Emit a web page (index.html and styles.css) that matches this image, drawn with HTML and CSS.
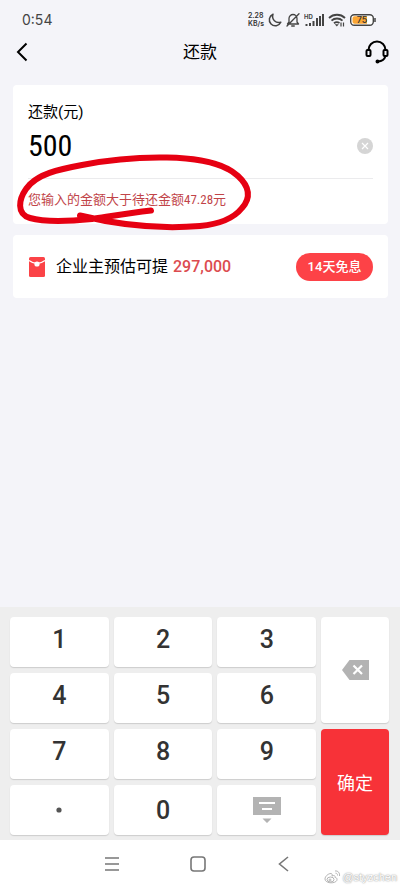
FILE: index.html
```html
<!DOCTYPE html>
<html lang="zh-CN">
<head>
<meta charset="utf-8">
<meta name="viewport" content="width=device-width, initial-scale=1">
<title>还款</title>
<link rel="stylesheet" href="styles.css">
</head>
<body>
<div class="screen">
  <div class="status">
    <span class="clock">0:54</span>
    <div class="indicators">
      <span class="speed"><span>2.28</span><span>KB/s</span></span>
      <svg width="14" height="14" viewBox="0 0 14 14"><path d="M5 1.2a6 6 0 1 0 7.8 8A6.2 6.2 0 0 1 5 1.2z" fill="none" stroke="#444" stroke-width="1.5" stroke-linejoin="round"/></svg>
      <svg width="14" height="14" viewBox="0 0 14 14" fill="none" stroke="#444" stroke-width="1.3" stroke-linecap="round" stroke-linejoin="round"><path d="M3 9V5.5a4 4 0 0 1 8 0V9l1.500 2h-11zM5.700 13h2.600M13 .8L1 13"/></svg>
      <svg width="20" height="14" viewBox="0 0 20 14"><text x="0" y="6" class="hd">HD</text><path d="M2.500 13v-2M6 13v-3M9.500 13V8M13 13V5M16 13V3M19 13V1" stroke="#444" stroke-width="2"/></svg>
      <svg width="18" height="14" viewBox="0 0 18 14" fill="none" stroke="#444" stroke-width="1.800"><path d="M1 5a11.500 11.500 0 0 1 16 0M3.500 7.700a8 8 0 0 1 11 0M6 10.300a4.500 4.500 0 0 1 5.500-.3"/><path d="M8.800 13.500l-2-2.200h4z" fill="#444" stroke="none"/><path d="M13 9.500v4M15.500 9.500v4" stroke-width="1.200"/></svg>
      <svg width="26" height="12" viewBox="0 0 26 12"><rect x=".7" y=".7" width="22.600" height="10.600" rx="3.500" fill="#fff" stroke="#444" stroke-width="1.400"/><path d="M4.500 2.200H17v7.600H4.500A2 2 0 0 1 2.500 8V4a2 2 0 0 1 2-1.800z" fill="#faa634"/><path d="M25 4v4" stroke="#444" stroke-width="1.500"/><text x="12" y="9" text-anchor="middle" class="charge">75</text></svg>
    </div>
  </div>
  <header class="header">
    <button class="header-btn start" aria-label="返回"><svg width="12" height="20" viewBox="0 0 12 20"><path d="M10.500 1.500L2 10l8.500 8.500" fill="none" stroke="#000" stroke-width="2"/></svg></button>
    <h1>还款</h1>
    <button class="header-btn" aria-label="客服"><svg width="24" height="24" viewBox="0 0 24 24" fill="none" stroke="#000" stroke-width="2"><path d="M3.500 10a8.500 8.500 0 0 1 17 0M20.500 16c-1 3.500-4 5.300-7.500 5.500"/><rect x="1.500" y="10" width="4" height="6" rx="1"/><rect x="18.500" y="10" width="4" height="6" rx="1"/><circle cx="12.500" cy="21.500" r="1" fill="#000"/></svg></button>
  </header>
  <main class="main">
    <section class="card amount-card">
      <label class="amount-label" for="amount">还款(元)</label>
      <div class="amount-row">
        <input id="amount" class="amount" type="text" inputmode="decimal" value="500">
        <button aria-label="清除"><svg width="16" height="16" viewBox="0 0 16 16"><circle cx="8" cy="8" r="8" fill="#d5d5d5"/><path d="M5 5l6 6M11 5l-6 6" stroke="#fff" stroke-width="1.200"/></svg></button>
      </div>
      <p class="error">您输入的金额大于待还金额47.28元</p>
      <svg class="marker" width="270" height="170" viewBox="0 70 270 170"><path d="M151 210.500C130 213 112 216 92 219C72 221 44 222 30 218C16 214 19 199 26 189C36 174 60 169 82 165C112 159 140 157 167 157.500C198 158 224 163 238 176C250 187 251 198 242 208C234 218 221 224 200 226C164 229 123 226 80 215.500" fill="none" stroke="#e60012" stroke-width="6" stroke-linecap="round" stroke-linejoin="round"/></svg>
    </section>
    <section class="card offer">
      <svg width="18" height="20" viewBox="0 0 18 20"><rect x="1" y="0" width="16" height="20" rx="1.500" fill="#fb4347"/><path d="M1 3.500q8 6 16 0" fill="none" stroke="#fff" stroke-width="1.300"/><circle cx="9" cy="7" r="2.600" fill="#fff"/></svg>
      <span class="offer-text">企业主预估可提</span>
      <strong class="offer-sum">297,000</strong>
      <button class="pill">14天免息</button>
    </section>
  </main>
  <div class="keypad">
    <button class="key">1</button><button class="key">2</button><button class="key">3</button>
    <button class="key tall" aria-label="删除"><svg width="28" height="20" viewBox="0 0 28 20"><path d="M8.500 0H28v20H8.500L1 10z" fill="#b3b3b3"/><path d="M12.500 5.500l8.500 8.500M21 5.500L12.500 14" stroke="#fff" stroke-width="2.200"/></svg></button>
    <button class="key">4</button><button class="key">5</button><button class="key">6</button>
    <button class="key">7</button><button class="key">8</button><button class="key">9</button>
    <button class="key tall confirm">确定</button>
    <button class="key low" aria-label="小数点"><svg width="6" height="6" viewBox="0 0 6 6"><circle cx="3" cy="3" r="2.600" fill="#555"/></svg></button>
    <button class="key low">0</button>
    <button class="key low" aria-label="收起键盘"><svg width="30" height="28" viewBox="0 0 30 28"><path d="M1 1h28v18H1zM10.500 22.500h9L15 27z" fill="#b3b3b3"/><path d="M7 7h16M10 13h10" stroke="#fff" stroke-width="2"/></svg></button>
  </div>
  <nav class="system">
    <button aria-label="菜单"><svg width="16" height="16" viewBox="0 0 16 16"><path d="M1 2h14M1 8h14M1 14h14" stroke="#777" stroke-width="1.600"/></svg></button>
    <button aria-label="主页"><svg width="16" height="16" viewBox="0 0 16 16"><rect x="1" y="1" width="14" height="14" rx="3" fill="none" stroke="#777" stroke-width="1.600"/></svg></button>
    <button aria-label="后退"><svg width="16" height="16" viewBox="0 0 16 16"><path d="M12 1L3.500 8l8.500 7" fill="none" stroke="#777" stroke-width="1.600"/></svg></button>
    <div class="watermark"><svg width="17" height="14" viewBox="0 0 17 14" fill="none" stroke="#b5b5b5" stroke-width="1"><path d="M7 3.500C4 3.500 1 6.500 1 9c0 5 12 5 12 .5 0-1.500-1-2-2-2 .5-2-1-2.500-3-1.500C8.500 4.500 8 3.500 7 3.500z"/><ellipse cx="6.500" cy="9.500" rx="3.500" ry="2.500"/><circle cx="6" cy="10" r="1"/><path d="M11 1c3-.5 5 2 4.500 5M11.500 3.200c1.500 0 2.200 1 2 2.300"/></svg><span>@styzchen</span></div>
  </nav>
</div>
</body>
</html>
```

FILE: styles.css
```css
* { box-sizing: border-box; }
body {
  margin: 0;
  color: #000;
  background: #f4f4f9;
  font-family: Roboto, "Noto Sans CJK SC", sans-serif;
}
button, input { font: inherit; color: inherit; border: 0; padding: 0; background: none; }
svg { display: block; flex: none; }
.screen { display: flex; flex-direction: column; min-height: 100vh; }
.status {
  display: flex;
  align-items: center;
  justify-content: space-between;
  height: 32px;
  padding: 8px 24px 0 22px;
}
.clock { font: 14px/20px Inter, sans-serif; color: #444; }
.indicators { display: flex; align-items: center; gap: 4px; }
.speed { display: flex; flex-direction: column; font: 600 7px/8px Inter, sans-serif; color: #333; }
.hd { font: 700 6px Inter, sans-serif; fill: #444; }
.charge { font: 500 9px Inter, sans-serif; fill: #333; }
.header {
  display: flex;
  align-items: center;
  justify-content: space-between;
  height: 40px;
  padding: 0 11px;
}
.header-btn { display: flex; width: 24px; }
.header-btn.start { padding-left: 5px; }
.header h1 { margin: 0; font-size: 17px; line-height: 24px; font-weight: 400; }
.main { flex: 1; display: flex; flex-direction: column; gap: 11px; padding: 13px 12px 13px 13px; }
.card { background: #fff; border-radius: 4px; padding: 0 15px; }
.amount-card { position: relative; padding-top: 16px; }
.amount-label { display: block; font-size: 15px; line-height: 22px; }
.amount-row {
  display: flex;
  align-items: center;
  justify-content: space-between;
  height: 56px;
  padding-bottom: 10px;
  border-bottom: 1px solid #ebebed;
}
.amount {
  flex: 1;
  min-width: 0;
  font: 400 30px/36px "Roboto Condensed", "Liberation Sans Narrow", "Noto Sans CJK SC", sans-serif;
  outline: 0;
}
.error {
  margin: 0;
  padding: 11px 0 14px;
  font: 13px/20px "Roboto Condensed", "Liberation Sans Narrow", "Noto Sans CJK SC", sans-serif;
  color: #c14448;
}
.marker { position: absolute; left: -13px; top: -15px; pointer-events: none; }
.offer { display: flex; align-items: center; height: 63px; }
.offer-text { margin-left: 10px; font-size: 16px; line-height: 24px; }
.offer-sum { margin-left: 5px; font-size: 16px; line-height: 24px; font-weight: 500; color: #dc4c50; }
.pill {
  margin-left: auto;
  width: 77px;
  height: 28px;
  border-radius: 14px;
  background: #fd4247;
  color: #fff;
  font-size: 13px;
  font-weight: 500;
  line-height: 28px;
}
.keypad {
  display: grid;
  grid-template-columns: 99fr 99fr 99fr 68fr;
  grid-auto-rows: 50px;
  gap: 6px 5px;
  padding: 10px 11px 5px 10px;
  background: #eee;
}
.key {
  display: flex;
  align-items: center;
  justify-content: center;
  padding-bottom: 6px;
  border-radius: 4px;
  background: #fff;
  box-shadow: 0 1px 1px #ccc;
  color: #333;
  font-size: 25px;
  font-weight: 500;
}
.low { padding-bottom: 0; }
.tall { grid-row: span 2; padding-bottom: 0; }
.confirm { background: #f73238; color: #fff; font-size: 18px; font-weight: 400; }
.system {
  position: relative;
  display: flex;
  align-items: center;
  justify-content: center;
  gap: 70px;
  height: 48px;
  padding-right: 4px;
  background: #fff;
}
.watermark {
  position: absolute;
  right: 3px;
  bottom: 3px;
  display: flex;
  align-items: center;
  gap: 1px;
  font: 11px/16px "Liberation Sans", sans-serif;
  color: #fff;
  text-shadow: 0 0 1px #999, 0 0 2px #aaa;
}
```
